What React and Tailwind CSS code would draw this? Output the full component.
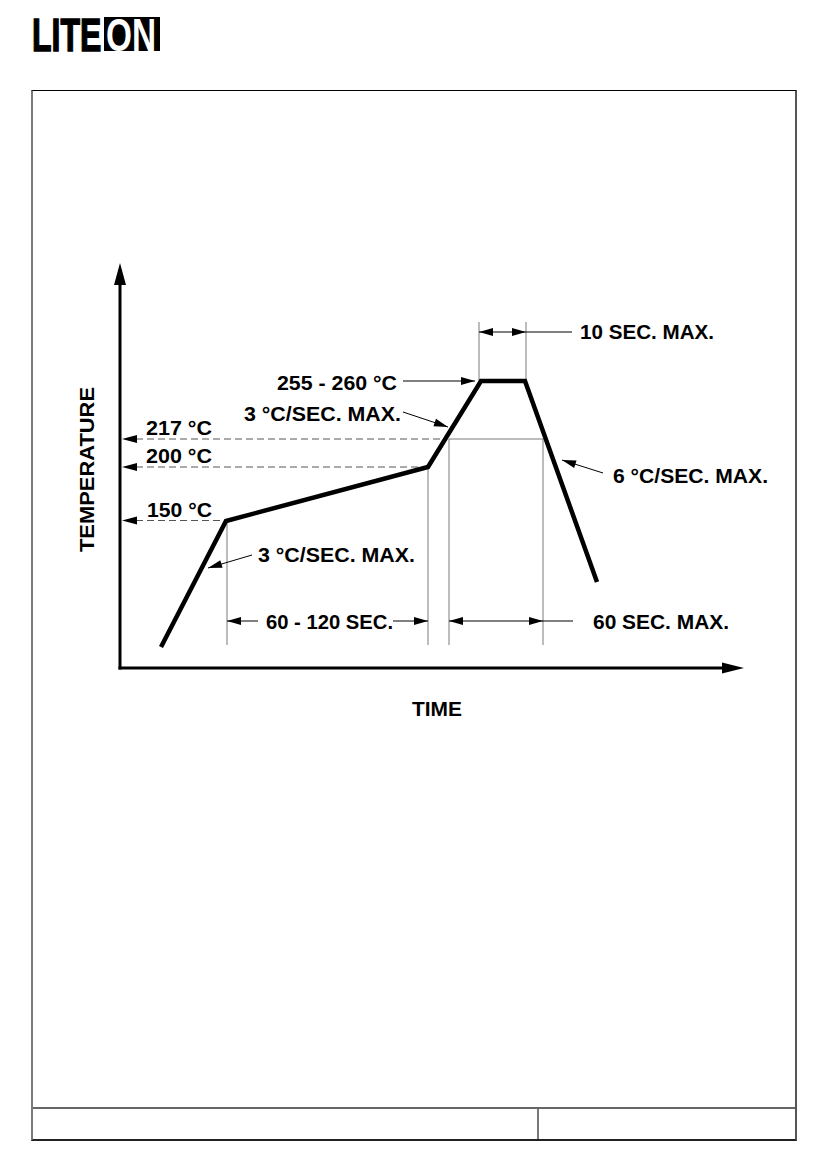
const FONT = '"Liberation Sans", Arial, sans-serif'

// solid arrowhead: tip at (x,y), pointing toward angle (deg), 0 = right
function Head({ x, y, angle, len = 14, half = 4 }) {
  const a = (angle * Math.PI) / 180
  const bx = x - len * Math.cos(a)
  const by = y - len * Math.sin(a)
  const px = -Math.sin(a) * half
  const py = Math.cos(a) * half
  return <polygon points={`${x},${y} ${bx + px},${by + py} ${bx - px},${by - py}`} fill="#000" />
}

function Leader({ x1, y1, x2, y2 }) {
  const angle = (Math.atan2(y2 - y1, x2 - x1) * 180) / Math.PI
  return (
    <g>
      <line x1={x1} y1={y1} x2={x2} y2={y2} stroke="#000" strokeWidth="1" />
      <Head x={x2} y={y2} angle={angle} />
    </g>
  )
}

function Label({ x, y, w, children }) {
  return (
    <text x={x} y={y} textLength={w} lengthAdjust="spacingAndGlyphs" fontFamily={FONT} fontWeight="700" fontSize="20" fill="#000">
      {children}
    </text>
  )
}

function Logo() {
  return (
    <svg width="136" height="40" viewBox="0 0 136 40" className="block overflow-visible">
      <g transform="translate(1 35) scale(0.68 1)">
        <text x="0" y="0" fontFamily={FONT} fontWeight="700" fontSize="47" fill="#000" stroke="#000" strokeWidth="1.5">LITE</text>
      </g>
      <rect x="73" y="1" width="56" height="34" fill="#000" />
      <g transform="translate(75 35) scale(0.71 1)">
        <text x="0" y="0" fontFamily={FONT} fontWeight="700" fontSize="47" fill="#fff">ON</text>
      </g>
    </svg>
  )
}

function ReflowChart() {
  const thin = '#7a7a7a'
  return (
    <svg width="762" height="1016" viewBox="33 91 762 1016" className="block">
      {/* axes */}
      <line x1="120" y1="280" x2="120" y2="669.5" stroke="#000" strokeWidth="3" />
      <polygon points="120,263 114,285 126,285" fill="#000" />
      <line x1="118.5" y1="668" x2="725" y2="668" stroke="#000" strokeWidth="3" />
      <polygon points="744,668 722,662.5 722,673.5" fill="#000" />

      {/* dashed reference levels */}
      <g stroke="#555" strokeWidth="1" strokeDasharray="7 4">
        <line x1="136" y1="439" x2="444" y2="439" />
        <line x1="136" y1="467" x2="427" y2="467" />
        <line x1="136" y1="520.5" x2="224" y2="520.5" />
      </g>
      <Head x={122} y={439} angle={180} len={15} />
      <Head x={122} y={467} angle={180} len={15} />
      <Head x={122} y={520.5} angle={180} len={15} />

      {/* thin dimension lines */}
      <g stroke={thin} strokeWidth="1">
        <line x1="227" y1="521" x2="227" y2="645" />
        <line x1="428" y1="467" x2="428" y2="645" />
        <line x1="449" y1="439" x2="449" y2="645" />
        <line x1="543" y1="439" x2="543" y2="645" />
        <line x1="449" y1="439" x2="543" y2="439" />
        <line x1="479" y1="322" x2="479" y2="381" />
        <line x1="526" y1="322" x2="526" y2="381" />
      </g>

      {/* profile */}
      <polyline
        points="161,647 226,521 428,467 481,381 525,381 597,582"
        fill="none"
        stroke="#000"
        strokeWidth="4.5"
        strokeLinejoin="miter"
      />

      {/* 10 sec */}
      <line x1="479" y1="332" x2="572" y2="332" stroke="#000" strokeWidth="1" />
      <Head x={479} y={332} angle={180} />
      <Head x={526} y={332} angle={0} />
      <Label x={580} y={339} w={134}>10 SEC. MAX.</Label>

      {/* peak */}
      <Leader x1={403} y1={381} x2={475} y2={381} />
      <Label x={277} y={390} w={120}>255 - 260 °C</Label>

      <Leader x1={403} y1={412} x2={448} y2={427} />
      <Label x={244} y={421} w={157}>3 °C/SEC. MAX.</Label>

      <Label x={146} y={435} w={66}>217 °C</Label>
      <Label x={146} y={463} w={66}>200 °C</Label>
      <Label x={147} y={517} w={65}>150 °C</Label>

      <Leader x1={603} y1={473} x2={562} y2={460} />
      <Label x={613} y={483} w={155}>6 °C/SEC. MAX.</Label>

      <Leader x1={252} y1={555} x2={208} y2={568} />
      <Label x={258} y={562} w={157}>3 °C/SEC. MAX.</Label>

      {/* 60 - 120 sec */}
      <Leader x1={258} y1={621} x2={227} y2={621} />
      <Leader x1={393} y1={621} x2={428} y2={621} />
      <Label x={266} y={629} w={127}>60 - 120 SEC.</Label>

      {/* 60 sec max */}
      <line x1="449" y1="621" x2="573" y2="621" stroke="#000" strokeWidth="1" />
      <Head x={449} y={621} angle={180} />
      <Head x={543} y={621} angle={0} />
      <Label x={593} y={629} w={136}>60 SEC. MAX.</Label>

      {/* axis titles */}
      <Label x={412} y={716} w={50}>TIME</Label>
      <text
        x="0"
        y="0"
        transform="translate(94 552) rotate(-90)"
        textLength="165"
        lengthAdjust="spacingAndGlyphs"
        fontFamily={FONT}
        fontWeight="700"
        fontSize="21"
        fill="#000"
      >
        TEMPERATURE
      </text>
    </svg>
  )
}

export default function App() {
  return (
    <div className="w-[826px] h-[1169px] bg-white">
      <header className="h-[90px] pl-[31px] pt-[16px]">
        <Logo />
      </header>
      <div className="ml-[31px] w-[766px] h-[1051px] flex flex-col border-t border-t-black border-l-2 border-l-[#7a7a7a] border-r-2 border-r-[#555] border-b-2 border-b-[#222]">
        <div className="h-[1016px] overflow-hidden">
          <ReflowChart />
        </div>
        <div className="flex-1 grid grid-cols-[506px_1fr] border-t-2 border-t-[#666]">
          <div className="border-r-2 border-r-[#777]" />
          <div />
        </div>
      </div>
    </div>
  )
}
